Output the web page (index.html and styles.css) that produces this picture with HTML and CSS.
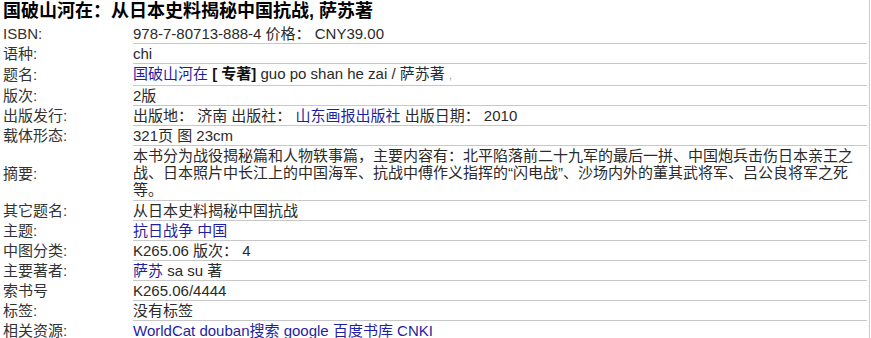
FILE: index.html
```html
<!DOCTYPE html>
<html lang="zh-CN">
<head>
<meta charset="utf-8">
<title>国破山河在：从日本史料揭秘中国抗战</title>
<link rel="stylesheet" href="styles.css">
</head>
<body>
<div class="page">
  <h1 class="title">国破山河在：从日本史料揭秘中国抗战, 萨苏著</h1>
  <div class="rows">
    <div class="row"><div class="label">ISBN:</div><div class="value">978-7-80713-888-4 价格： CNY39.00</div></div>
    <div class="row"><div class="label">语种:</div><div class="value">chi</div></div>
    <div class="row"><div class="label">题名:</div><div class="value"><a class="link" href="#">国破山河在</a> <b>[ 专著]</b> guo po shan he zai / 萨苏著 <span class="faint">,</span></div></div>
    <div class="row"><div class="label">版次:</div><div class="value">2版</div></div>
    <div class="row"><div class="label">出版发行:</div><div class="value">出版地： 济南 出版社： <a class="link" href="#">山东画报出版社</a> 出版日期： 2010</div></div>
    <div class="row"><div class="label">载体形态:</div><div class="value">321页 图 23cm</div></div>
    <div class="row"><div class="label">摘要:</div><div class="value value-long">本书分为战役揭秘篇和人物轶事篇，主要内容有：北平陷落前二十九军的最后一拼、中国炮兵击伤日本亲王之战、日本照片中长江上的中国海军、抗战中傅作义指挥的“闪电战”、沙场内外的董其武将军、吕公良将军之死等。</div></div>
    <div class="row"><div class="label">其它题名:</div><div class="value">从日本史料揭秘中国抗战</div></div>
    <div class="row"><div class="label">主题:</div><div class="value"><a class="link" href="#">抗日战争</a> <a class="link" href="#">中国</a></div></div>
    <div class="row"><div class="label">中图分类:</div><div class="value">K265.06 版次： 4</div></div>
    <div class="row"><div class="label">主要著者:</div><div class="value"><a class="link" href="#">萨苏</a> sa su 著</div></div>
    <div class="row"><div class="label">索书号</div><div class="value">K265.06/4444</div></div>
    <div class="row"><div class="label">标签:</div><div class="value">没有标签</div></div>
    <div class="row"><div class="label">相关资源:</div><div class="value"><a class="link" href="#">WorldCat</a> <a class="link" href="#">douban搜索</a> <a class="link" href="#">google</a> <a class="link" href="#">百度书库</a> <a class="link" href="#">CNKI</a></div></div>
  </div>
</div>
</body>
</html>
```
FILE: styles.css
```css
html, body {
  margin: 0;
  padding: 0;
  background: #ffffff;
}

body {
  font-family: "Liberation Sans", "Noto Sans CJK SC", sans-serif;
  font-size: 15px;
  color: #2a2a2a;
}

.page {
  box-sizing: border-box;
  width: 870px;
  min-height: 100vh;
  padding: 0 2px 0 3px;
  border-right: 1px solid #cccccc;
}

.title {
  margin: 0;
  height: 24px;
  font-size: 18px;
  line-height: 22px;
  font-weight: bold;
  color: #000000;
}

.rows {
  display: flex;
  flex-direction: column;
}

.row {
  display: grid;
  grid-template-columns: 130px 1fr;
}

.label {
  align-self: center;
  padding: 1px 0 2px;
  line-height: 17px;
  color: #333333;
  white-space: nowrap;
}

.value {
  padding: 1px 0 1px;
  line-height: 17px;
  border-bottom: 1px solid #c8c8c8;
}

.value-long {
  padding-bottom: 2px;
}

.value b {
  color: #111111;
}

.link {
  color: #1f1fa0;
  text-decoration: none;
}

.faint {
  color: #999999;
  font-size: 11px;
}
```
